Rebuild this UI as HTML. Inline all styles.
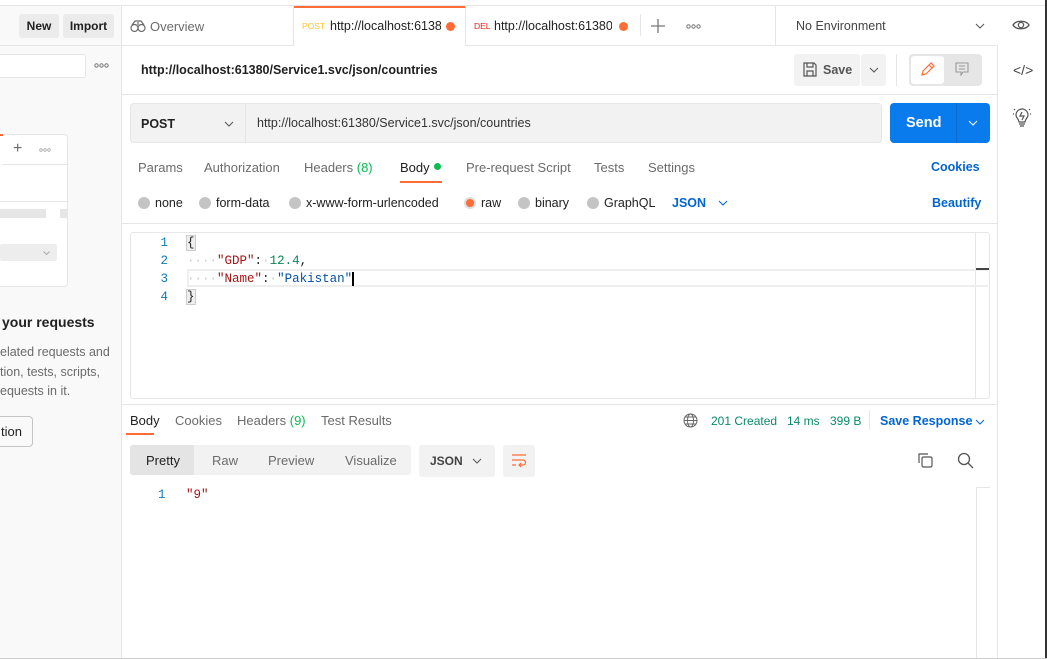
<!DOCTYPE html>
<html><head><meta charset="utf-8"><style>
*{box-sizing:border-box;margin:0;padding:0}
body{width:1047px;height:659px;overflow:hidden;background:#fff;font-family:"Liberation Sans",sans-serif;font-size:13px;color:#212121;position:relative}
.a{position:absolute;white-space:nowrap}
.hl{position:absolute;background:#e6e6e6;height:1px}
.vl{position:absolute;background:#e6e6e6;width:1px}
.g{color:#6b6b6b}
.mono{font-family:"Liberation Mono",monospace;font-size:12.5px}
.rad{position:absolute;width:12px;height:12px;border-radius:50%;background:#c4c4c4}
.blue{color:#0265d2}
</style></head><body>
<!-- sidebar -->
<div class="a" style="left:0;top:5px;width:121px;height:654px;background:#f9f9f9"></div>
<div class="hl" style="left:0;top:5px;width:1047px"></div>
<div class="hl" style="left:0;top:45px;width:997px"></div>
<div class="vl" style="left:121px;top:5px;height:654px"></div>
<div class="a" style="left:19px;top:14px;width:40px;height:24px;background:#ebebeb;border-radius:3px;font-weight:bold;font-size:12px;text-align:center;line-height:24px">New</div>
<div class="a" style="left:63px;top:14px;width:51px;height:24px;background:#ebebeb;border-radius:3px;font-weight:bold;font-size:12px;text-align:center;line-height:24px">Import</div>
<div class="a" style="left:0;top:54px;width:86px;height:24px;background:#fff;border:1px solid #e6e6e6;border-left:none;border-radius:0 3px 3px 0"></div>
<svg class="a" style="left:94px;top:63px" width="16" height="5"><g fill="none" stroke="#777"><circle cx="2.5" cy="2.5" r="1.7"/><circle cx="7.5" cy="2.5" r="1.7"/><circle cx="12.5" cy="2.5" r="1.7"/></g></svg>
<div class="a" style="left:0;top:134px;width:68px;height:153px;background:#fff;border:1px solid #e6e6e6;border-left:none;border-radius:0 4px 4px 0"></div>
<div class="a" style="left:0;top:134px;width:3px;height:2px;background:#ff6c37"></div>
<div class="hl" style="left:2px;top:164px;width:66px"></div>
<div class="a g" style="left:13px;top:140px;font-size:16px">+</div>
<svg class="a" style="left:39px;top:148px" width="13" height="4"><g fill="none" stroke="#aaa" stroke-width=".8"><circle cx="2" cy="2" r="1.3"/><circle cx="6" cy="2" r="1.3"/><circle cx="10" cy="2" r="1.3"/></g></svg>
<div class="hl" style="left:0;top:201px;width:68px"></div>
<div class="a" style="left:0;top:209px;width:46px;height:9px;background:#e6e6e6"></div>
<div class="a" style="left:60px;top:209px;width:8px;height:9px;background:#e6e6e6"></div>
<div class="a" style="left:0;top:244px;width:57px;height:17px;background:#ededed;border-radius:2px"></div>
<svg class="a" style="left:43px;top:251px" width="7" height="4"><path d="M.5.5l3 3 3-3" stroke="#aaa" fill="none"/></svg>
<div class="a" style="left:2px;top:314px;font-weight:bold;font-size:14px">your requests</div>
<div class="a g" style="left:0;top:343px;font-size:12.5px;line-height:19.7px;color:#6b6b6b">elated requests and<br>tion, tests, scripts,<br>equests in it.</div>
<div class="a" style="left:-4px;top:416px;width:37px;height:31px;border:1px solid #c4c4c4;border-radius:4px;font-size:13px;line-height:29px;padding-left:4px">tion</div>
<!-- top tabs -->
<svg class="a" style="left:130px;top:19px" width="16" height="14" viewBox="0 0 16 14" fill="none" stroke="#6b6b6b" stroke-width="1.2"><circle cx="4.5" cy="9" r="3.5"/><circle cx="11.5" cy="9" r="3.5"/><path d="M2 6 5 2h6l3 4M8 3v3"/></svg>
<div class="a g" style="left:150px;top:19px">Overview</div>
<div class="vl" style="left:293px;top:5px;height:40px"></div>
<div class="a" style="left:294px;top:6px;width:171px;height:40px;background:#fff;border-top:2px solid #ff6c37"></div>
<div class="a" style="left:302px;top:21px;font-size:8.5px;color:#ffb400;opacity:.8">POST</div>
<div class="a" style="left:330px;top:19px;width:111px;overflow:hidden;font-size:12.5px">http://localhost:61380/</div>
<div class="a" style="left:446px;top:22px;width:9px;height:9px;border-radius:50%;background:#ff6c37"></div>
<div class="vl" style="left:465px;top:5px;height:40px"></div>
<div class="a" style="left:474px;top:21px;font-size:8.5px;color:#eb2013">DEL</div>
<div class="a" style="left:494px;top:19px;width:118px;overflow:hidden;font-size:12.5px">http://localhost:61380/</div>
<div class="a" style="left:619px;top:22px;width:9px;height:9px;border-radius:50%;background:#ff6c37"></div>
<div class="vl" style="left:640px;top:14px;height:22px"></div>
<svg class="a" style="left:651px;top:19px" width="14" height="14"><path d="M7 0v14M0 7h14" stroke="#777" stroke-width="1.3"/></svg>
<svg class="a" style="left:686px;top:24px" width="16" height="5"><g fill="none" stroke="#777"><circle cx="2.5" cy="2.5" r="1.7"/><circle cx="7.5" cy="2.5" r="1.7"/><circle cx="12.5" cy="2.5" r="1.7"/></g></svg>
<div class="vl" style="left:775px;top:5px;height:40px"></div>
<div class="a" style="left:796px;top:19px;font-size:12.5px;color:#444">No Environment</div>
<svg class="a" style="left:975px;top:23px" width="10" height="6"><path d="M1 1l4 4 4-4" stroke="#555" fill="none"/></svg>
<svg class="a" style="left:1012px;top:18px" width="18" height="14" viewBox="0 0 18 14" fill="none" stroke="#555" stroke-width="1.3"><path d="M1 7C4 2 14 2 17 7 14 12 4 12 1 7z"/><circle cx="9" cy="7" r="2.6"/></svg>
<!-- right sidebar -->
<div class="vl" style="left:997px;top:45px;height:614px"></div>
<div class="a" style="left:1045px;top:0;width:2px;height:659px;background:#333"></div>
<div class="a g" style="left:1013px;top:62px;font-size:14px;color:#444">&lt;/&gt;</div>
<svg class="a" style="left:1013px;top:108px" width="18" height="20" viewBox="0 0 18 20" fill="none" stroke="#555" stroke-width="1.2"><path d="M6 14c0-3-3-4-3-7a6 6 0 0112 0c0 3-3 4-3 7zM6 16h6M7 18h4M9 4l-2 4h4l-2 4M0 6h1M17 6h1M1 1l1 1M17 1l-1 1"/></svg>
<!-- title -->
<div class="a" style="left:141px;top:63px;font-weight:bold;font-size:12.5px">http://localhost:61380/Service1.svc/json/countries</div>
<div class="a" style="left:794px;top:54px;width:66px;height:32px;background:#f2f2f2;border-radius:3px"></div>
<svg class="a" style="left:803px;top:62px" width="14" height="15" viewBox="0 0 14 15" fill="none" stroke="#555" stroke-width="1.2"><path d="M1 1h10l2 2v11H1zM4 1v4h6V1M4 14V9h6v5"/></svg>
<div class="a" style="left:823px;top:63px;font-weight:bold;font-size:12.5px;color:#555">Save</div>
<div class="a" style="left:861px;top:54px;width:25px;height:32px;background:#f2f2f2;border-radius:3px"></div>
<svg class="a" style="left:869px;top:67px" width="10" height="6"><path d="M1 1l4 4 4-4" stroke="#555" fill="none"/></svg>
<div class="vl" style="left:896px;top:54px;height:32px"></div>
<div class="a" style="left:909px;top:54px;width:73px;height:32px;background:#e6e6e6;border-radius:4px"></div>
<div class="a" style="left:911px;top:56px;width:33px;height:28px;background:#fff;border-radius:3px"></div>
<svg class="a" style="left:920px;top:61px" width="16" height="16" viewBox="0 0 16 16" fill="none" stroke="#ff6c37" stroke-width="1.2"><path d="M2 14l1-4 8-8 3 3-8 8zM9 4l3 3"/></svg>
<svg class="a" style="left:955px;top:62px" width="14" height="14" viewBox="0 0 14 14" fill="none" stroke="#999" stroke-width="1.1"><path d="M1 1h12v9H8l-2 3v-3H1zM4 4h6M4 7h6"/></svg>
<div class="hl" style="left:122px;top:94px;width:875px"></div>
<!-- request bar -->
<div class="a" style="left:130px;top:103px;width:752px;height:40px;background:#f2f2f2;border:1px solid #e6e6e6;border-radius:4px"></div>
<div class="vl" style="left:245px;top:104px;height:38px"></div>
<div class="a" style="left:141px;top:117px;font-weight:bold;font-size:12.5px">POST</div>
<svg class="a" style="left:224px;top:121px" width="10" height="6"><path d="M1 1l4 4 4-4" stroke="#555" fill="none"/></svg>
<div class="a" style="left:257px;top:116px;font-size:12.5px;color:#333">http://localhost:61380/Service1.svc/json/countries</div>
<div class="a" style="left:890px;top:103px;width:100px;height:40px;background:#097bed;border-radius:4px"></div>
<div class="a" style="left:906px;top:115px;color:#fff;font-weight:bold;font-size:14.5px">Send</div>
<div class="a" style="left:956px;top:103px;width:1px;height:40px;background:#0a6bcc"></div>
<svg class="a" style="left:968px;top:120px" width="10" height="6"><path d="M1 1l4 4 4-4" stroke="#fff" fill="none"/></svg>
<!-- tabs -->
<div class="a g" style="left:138px;top:160px">Params</div>
<div class="a g" style="left:204px;top:160px">Authorization</div>
<div class="a g" style="left:304px;top:160px">Headers <span style="color:#0cbb52">(8)</span></div>
<div class="a" style="left:400px;top:160px">Body</div>
<div class="a" style="left:434px;top:163px;width:7px;height:7px;border-radius:50%;background:#0cbb52"></div>
<div class="a" style="left:400px;top:181px;width:42px;height:2px;background:#ff6c37"></div>
<div class="a g" style="left:466px;top:160px">Pre-request Script</div>
<div class="a g" style="left:594px;top:160px">Tests</div>
<div class="a g" style="left:648px;top:160px">Settings</div>
<div class="a blue" style="left:931px;top:160px;font-weight:bold;font-size:12.5px">Cookies</div>
<!-- radios -->
<div class="rad" style="left:138px;top:197px"></div><div class="a" style="left:155px;top:196px;font-size:12.5px">none</div>
<div class="rad" style="left:199px;top:197px"></div><div class="a" style="left:216px;top:196px;font-size:12.5px">form-data</div>
<div class="rad" style="left:289px;top:197px"></div><div class="a" style="left:306px;top:196px;font-size:12.5px">x-www-form-urlencoded</div>
<div class="rad" style="left:464px;top:197px;background:#ff6c37;border:2px solid #ddd"></div><div class="a" style="left:481px;top:196px;font-size:12.5px">raw</div>
<div class="rad" style="left:518px;top:197px"></div><div class="a" style="left:535px;top:196px;font-size:12.5px">binary</div>
<div class="rad" style="left:587px;top:197px"></div><div class="a" style="left:604px;top:196px;font-size:12.5px">GraphQL</div>
<div class="a blue" style="left:672px;top:196px;font-weight:bold;font-size:12.5px">JSON</div>
<svg class="a" style="left:718px;top:200px" width="10" height="6"><path d="M1 1l4 4 4-4" stroke="#0265d2" fill="none"/></svg>
<div class="a blue" style="left:932px;top:196px;font-weight:bold;font-size:12.5px">Beautify</div>
<div class="hl" style="left:122px;top:223px;width:875px"></div>
<!-- editor -->
<div class="a" style="left:130px;top:232px;width:860px;height:167px;border:1px solid #e6e6e6;border-radius:3px"></div>
<div class="vl" style="left:975px;top:233px;height:165px"></div>
<div class="a" style="left:187px;top:269px;width:801px;height:18px;border:2px solid #eee;border-right:none"></div>
<div class="a" style="left:976px;top:268px;width:13px;height:2px;background:#444"></div>
<div class="a mono" style="left:158px;top:234px;line-height:18px;color:#0f7ab8;text-align:right;width:10px">1<br>2<br>3<br>4</div>
<div class="a mono" style="left:187px;top:234px;line-height:18px;white-space:pre"><span style="background:#eee;outline:1px solid #ccc">{</span>
<span style="color:#ccc">····</span><span style="color:#a31515">"GDP"</span>:<span style="color:#ccc">·</span><span style="color:#098658">12.4</span>,
<span style="color:#ccc">····</span><span style="color:#a31515">"Name"</span>:<span style="color:#ccc">·</span><span style="color:#0451a5">"Pakistan"</span><span style="border-left:2px solid #000"></span>
<span style="background:#eee;outline:1px solid #ccc">}</span></div>
<div class="hl" style="left:122px;top:404px;width:875px"></div>
<!-- response -->
<div class="a" style="left:130px;top:413px">Body</div>
<div class="a" style="left:126px;top:433px;width:28px;height:2px;background:#ff6c37"></div>
<div class="a g" style="left:175px;top:413px">Cookies</div>
<div class="a g" style="left:237px;top:413px">Headers <span style="color:#0cbb52">(9)</span></div>
<div class="a g" style="left:321px;top:413px">Test Results</div>
<svg class="a" style="left:683px;top:413px" width="15" height="15" viewBox="0 0 15 15" fill="none" stroke="#666" stroke-width="1"><circle cx="7.5" cy="7.5" r="6.5"/><ellipse cx="7.5" cy="7.5" rx="3" ry="6.5"/><path d="M1 7.5h13M2 4h11M2 11h11"/></svg>
<div class="a" style="left:711px;top:414px;font-size:12px;color:#0a8a6a">201 Created</div>
<div class="a" style="left:787px;top:414px;font-size:12px;color:#0a8a6a">14 ms</div>
<div class="a" style="left:830px;top:414px;font-size:12px;color:#0a8a6a">399 B</div>
<div class="vl" style="left:869px;top:410px;height:20px"></div>
<div class="a blue" style="left:880px;top:414px;font-weight:bold;font-size:12.5px">Save Response</div>
<svg class="a" style="left:975px;top:419px" width="10" height="6"><path d="M1 1l4 4 4-4" stroke="#0265d2" fill="none"/></svg>
<div class="a" style="left:130px;top:445px;width:281px;height:30px;background:#f2f2f2;border-radius:3px"></div>
<div class="a" style="left:130px;top:445px;width:64px;height:30px;background:#e4e4e4;border-radius:3px 0 0 3px"></div>
<div class="a" style="left:146px;top:453px">Pretty</div>
<div class="a g" style="left:212px;top:453px">Raw</div>
<div class="a g" style="left:268px;top:453px">Preview</div>
<div class="a g" style="left:345px;top:453px">Visualize</div>
<div class="a" style="left:419px;top:445px;width:76px;height:32px;background:#f2f2f2;border-radius:3px"></div>
<div class="a" style="left:430px;top:454px;font-weight:bold;font-size:12px;color:#444">JSON</div>
<svg class="a" style="left:472px;top:458px" width="10" height="6"><path d="M1 1l4 4 4-4" stroke="#555" fill="none"/></svg>
<div class="a" style="left:503px;top:445px;width:32px;height:32px;background:#f2f2f2;border-radius:3px"></div>
<svg class="a" style="left:511px;top:453px" width="16" height="15" viewBox="0 0 16 15" fill="none" stroke="#ff6c37" stroke-width="1.2"><path d="M1 2h14M1 7h11a2.5 2.5 0 010 5H8M10 10l-2 2 2 2M1 12h4"/></svg>
<svg class="a" style="left:918px;top:453px" width="15" height="15" viewBox="0 0 15 15" fill="none" stroke="#555" stroke-width="1.2"><path d="M1 10V1h9"/><rect x="4" y="4" width="10" height="10" rx="1.5"/></svg>
<svg class="a" style="left:957px;top:452px" width="17" height="17" viewBox="0 0 17 17" fill="none" stroke="#555" stroke-width="1.3"><circle cx="7" cy="7" r="5.5"/><path d="M11 11l5 5"/></svg>
<div class="a mono" style="left:158px;top:488px;color:#0f7ab8">1</div>
<div class="a mono" style="left:186px;top:488px;color:#a31515">"9"</div>
<div class="vl" style="left:976px;top:487px;height:172px"></div>
<div class="hl" style="left:976px;top:487px;width:14px"></div>
<div class="hl" style="left:0;top:658px;width:1047px;background:#ccc"></div>
</body></html>
